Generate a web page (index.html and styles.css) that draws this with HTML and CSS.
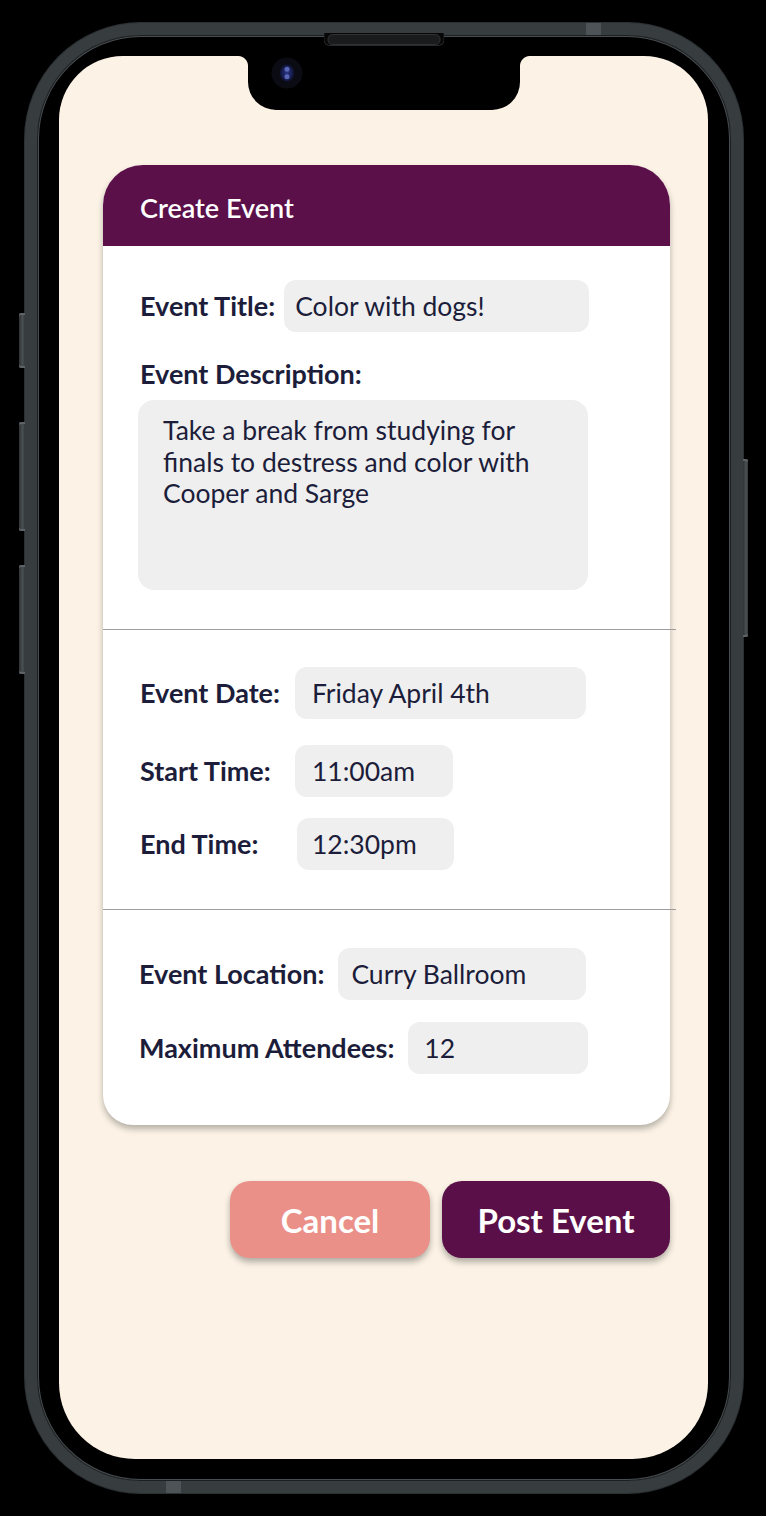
FILE: index.html
```html
<!DOCTYPE html>
<html lang="en">
<head>
<meta charset="utf-8">
<title>Create Event</title>
<link rel="stylesheet" href="styles.css">
</head>
<body>
<div class="phone">
  <span class="side-btn side-btn--mute"></span>
  <span class="side-btn side-btn--vol-up"></span>
  <span class="side-btn side-btn--vol-down"></span>
  <span class="side-btn side-btn--power"></span>
  <span class="antenna antenna--top"></span>
  <span class="antenna antenna--bottom"></span>
  <div class="speaker"></div>
  <div class="screen">
    <div class="notch">
      <svg class="camera" width="32" height="32" viewBox="0 0 32 32" aria-hidden="true">
        <defs>
          <radialGradient id="lens" cx="50%" cy="50%" r="50%">
            <stop offset="0" stop-color="#2a3788"/>
            <stop offset="1" stop-color="#0f1338"/>
          </radialGradient>
        </defs>
        <circle cx="16" cy="16" r="15.5" fill="#0b0b13"/>
        <ellipse cx="16" cy="16" rx="7" ry="8.5" fill="url(#lens)"/>
        <circle cx="16" cy="12.2" r="2.5" fill="#6673c4" opacity="0.85"/>
        <circle cx="16" cy="19.8" r="2.5" fill="#6673c4" opacity="0.85"/>
      </svg>
    </div>

    <main class="content">
      <section class="card">
        <header class="card-header">Create Event</header>

        <div class="card-section card-section--first">
          <div class="field field--title">
            <span class="label">Event Title:</span>
            <div class="value value--title">Color with dogs!</div>
          </div>
          <span class="label label--desc">Event Description:</span>
          <div class="value value--desc">Take a break from studying for finals to destress and color with Cooper and Sarge</div>
        </div>

        <div class="divider"></div>

        <div class="card-section card-section--time">
          <div class="field field--fixed">
            <span class="label">Event Date:</span>
            <div class="value value--date">Friday April 4th</div>
          </div>
          <div class="field field--fixed field--start">
            <span class="label">Start Time:</span>
            <div class="value value--start">11:00am</div>
          </div>
          <div class="field field--fixed field--end">
            <span class="label">End Time:</span>
            <div class="value value--end">12:30pm</div>
          </div>
        </div>

        <div class="divider"></div>

        <div class="card-section card-section--place">
          <div class="field field--wide">
            <span class="label">Event Location:</span>
            <div class="value value--location">Curry Ballroom</div>
          </div>
          <div class="field field--wide field--max">
            <span class="label">Maximum Attendees:</span>
            <div class="value value--max">12</div>
          </div>
        </div>
      </section>

      <div class="actions">
        <button class="btn btn--cancel" type="button">Cancel</button>
        <button class="btn btn--post" type="button">Post Event</button>
      </div>
    </main>
  </div>
</div>
</body>
</html>
```

FILE: styles.css
```css
* {
  box-sizing: border-box;
}

html,
body {
  margin: 0;
  padding: 0;
}

body {
  background: #000;
  width: 766px;
  height: 1516px;
  overflow: hidden;
  font-family: Lato, "Noto Sans", sans-serif;
  color: #1c1d3a;
}

/* ---------- phone frame ---------- */
.phone {
  position: relative;
  margin: 23px 0 0 25px;
  width: 718px;
  height: 1470px;
  border: 12px solid #373c3f;
  border-radius: 116px;
  padding: 21px 23px 22px 22px;
  display: flex;
  background: #000;
  box-shadow: inset 0 0 0 1px #1c1f21, inset 0 0 0 2px #474d50, 0 0 0 1px #2b3033;
}

.side-btn {
  position: absolute;
  width: 6px;
  background: linear-gradient(to right, #2e3235, #4b5053 60%, #34383b);
  border-radius: 2px 0 0 2px;
  box-shadow: inset 0 2px 0 #5d6366, inset 0 -2px 0 #5d6366;
}

.side-btn--mute {
  left: -18px;
  top: 278px;
  height: 55px;
}

.side-btn--vol-up {
  left: -18px;
  top: 387px;
  height: 109px;
}

.side-btn--vol-down {
  left: -18px;
  top: 530px;
  height: 109px;
}

.side-btn--power {
  right: -17px;
  top: 424px;
  width: 5px;
  height: 178px;
  border-radius: 0 2px 2px 0;
}

.antenna {
  position: absolute;
  width: 15px;
  height: 12px;
  background: #4d5357;
}

.antenna--top {
  top: -12px;
  left: 549px;
}

.antenna--bottom {
  bottom: -12px;
  left: 129px;
}

.speaker {
  position: absolute;
  top: -2px;
  left: 50%;
  transform: translateX(-50%);
  width: 121px;
  height: 13px;
  background: #070707;
  border: 1px solid #26292b;
  border-top: none;
  border-radius: 0 0 6px 6px;
}

.speaker::before {
  content: "";
  position: absolute;
  left: 3px;
  right: 3px;
  top: 1px;
  height: 9px;
  border-radius: 5px;
  background: #1a1b1c;
  border: 1px solid #303335;
}

/* ---------- screen ---------- */
.screen {
  position: relative;
  flex: 1;
  background: #fcf3e6;
  border-radius: 64px 64px 76px 76px;
}

.notch {
  position: absolute;
  top: 0;
  left: 50%;
  transform: translateX(-50%);
  width: 272px;
  height: 54px;
  background: #000;
  border-radius: 0 0 28px 28px;
}

.notch::before,
.notch::after {
  content: "";
  position: absolute;
  top: 0;
  width: 10px;
  height: 10px;
}

.notch::before {
  left: -10px;
  background: radial-gradient(circle at 0 100%, transparent 9.5px, #000 10.5px);
}

.notch::after {
  right: -10px;
  background: radial-gradient(circle at 100% 100%, transparent 9.5px, #000 10.5px);
}

.camera {
  position: absolute;
  left: 23px;
  top: 1px;
  display: block;
}

.content {
  padding: 109px 0 0 44px;
}

/* ---------- card ---------- */
.card {
  width: 567px;
  background: #fff;
  border-radius: 40px 40px 30px 30px;
  box-shadow: 0 4px 6px rgba(0, 0, 0, 0.28);
}

.card-header {
  height: 81px;
  display: flex;
  align-items: center;
  padding: 4px 0 0 37px;
  background: #5c1049;
  border-radius: 40px 40px 0 0;
  color: #fff;
  font-size: 27px;
  font-weight: 600;
}

.card-section {
  display: flex;
  flex-direction: column;
  align-items: flex-start;
  padding-left: 37px;
}

.card-section--first {
  padding-top: 34px;
  padding-bottom: 39px;
}

.card-section--time {
  padding-top: 37px;
  padding-bottom: 39px;
}

.card-section--place {
  padding-top: 38px;
  padding-bottom: 51px;
}

.divider {
  width: 573px;
  height: 1px;
  background: #9d9d9d;
}

.field {
  display: flex;
  align-items: center;
}

.field--title {
  gap: 9px;
}

.field--fixed .label {
  width: 155px;
}

.field--start {
  margin-top: 26px;
}

.field--end {
  margin-top: 21px;
}

.field--wide {
  gap: 14px;
  margin-left: -1px;
}

.field--max {
  margin-top: 22px;
}

.label {
  font-size: 27px;
  line-height: 32px;
  font-weight: 700;
  white-space: nowrap;
}

.label--desc {
  margin-top: 26px;
}

.value {
  height: 52px;
  display: flex;
  align-items: center;
  padding: 0 16px;
  background: #efefef;
  border-radius: 12px;
  font-size: 26.5px;
  white-space: nowrap;
}

.value--title {
  width: 305px;
  padding-left: 11px;
}

.value--desc {
  display: block;
  width: 450px;
  height: 190px;
  margin: 10px 0 0 -2px;
  padding: 15px 40px 0 25px;
  white-space: normal;
  line-height: 31.6px;
  border-radius: 16px;
}

.value--date {
  width: 291px;
  padding-left: 17px;
}

.value--start {
  width: 158px;
  padding-left: 17px;
}

.value--end {
  width: 157px;
  margin-left: 2px;
  padding-left: 15px;
}

.value--location {
  width: 248px;
  padding-left: 13px;
}

.value--max {
  width: 180px;
  padding-left: 16px;
}

/* ---------- actions ---------- */
.actions {
  display: flex;
  justify-content: flex-end;
  gap: 12px;
  margin-top: 56px;
  padding-right: 38px;
}

.btn {
  height: 77px;
  border: none;
  border-radius: 20px;
  color: #fff;
  font-family: Lato, "Noto Sans", sans-serif;
  font-weight: 700;
  display: flex;
  align-items: center;
  justify-content: center;
  padding: 0;
  box-shadow: 0 4px 6px rgba(0, 0, 0, 0.3);
}

.btn--cancel {
  width: 200px;
  background: #ea9088;
  font-size: 33px;
}

.btn--post {
  width: 228px;
  background: #5a0f48;
  font-size: 33px;
}
```
